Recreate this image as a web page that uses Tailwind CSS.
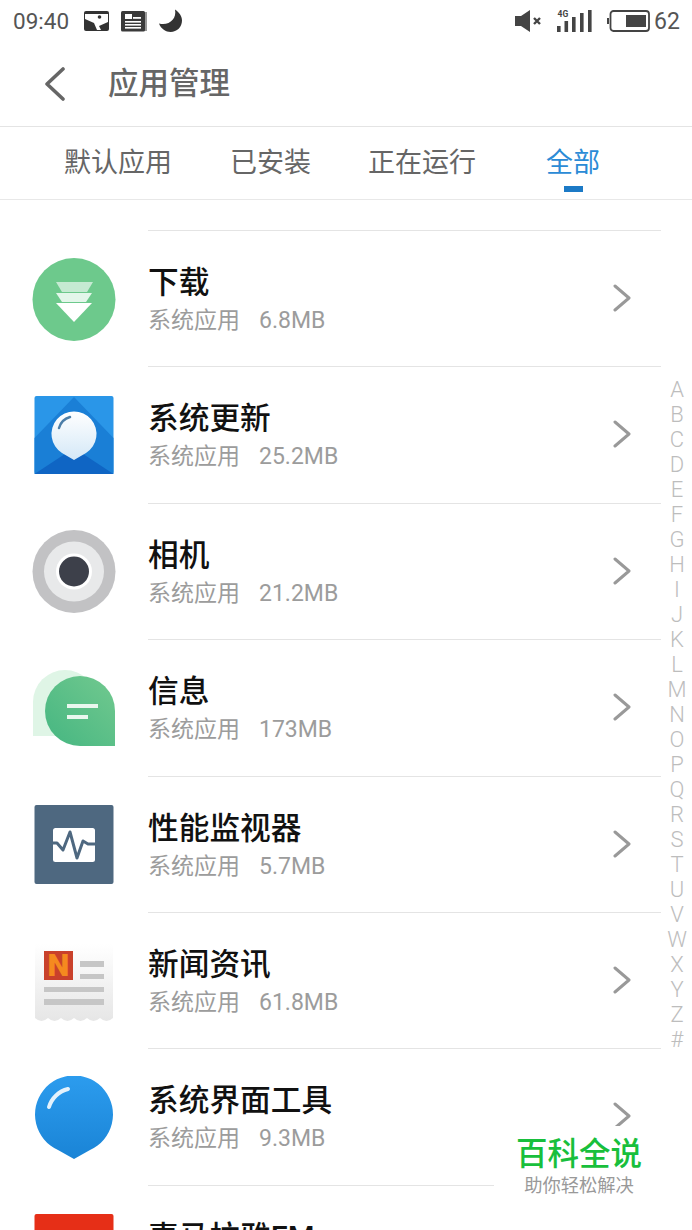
<!DOCTYPE html>
<html lang="zh-CN">

<head>
    <meta charset="UTF-8">
    <meta name="viewport" content="width=device-width, initial-scale=1.0">
    <title>应用管理</title>
    <script src="https://cdn.jsdelivr.net/npm/@tailwindcss/browser@4"></script>
</head>

<body class="bg-white font-['Roboto','Noto_Sans_CJK_SC',sans-serif]">
    <div class="relative h-[1230px] w-[692px] overflow-hidden bg-white">

        <!-- status bar -->
        <div class="flex h-[42px] items-center pl-[13px] text-[#555]">
            <span class="w-[71px] text-[22.5px] leading-none">09:40</span>
            <svg class="h-[22px] w-[26px]" viewBox="0 0 26 22">
                <rect x="0" y="1" width="25" height="20" rx="2" fill="#333" />
                <path d="M1 4 H24 V12 L15 16 L17 20 L13 20 L10 13 L1 9 Z" fill="#fff" />
                <circle cx="15.5" cy="7" r="1.8" fill="#333" />
            </svg>
            <svg class="ml-[11px] h-[22px] w-[27px]" viewBox="0 0 27 22">
                <rect x="21" y="2" width="5" height="19" fill="#999" />
                <rect x="0" y="1" width="24" height="20.5" rx="1.5" fill="#3a3a3a" />
                <rect x="4" y="4" width="7" height="5" fill="#fff" />
                <rect x="12" y="7" width="8" height="1.8" fill="#fff" />
                <rect x="4" y="11" width="16" height="1.6" fill="#fff" />
                <rect x="4" y="14" width="16" height="1.6" fill="#fff" />
                <rect x="4" y="17" width="16" height="1.6" fill="#fff" />
            </svg>
            <svg class="ml-[10px] h-[24px] w-[25px]" viewBox="0 0 25 24">
                <path d="M17 0.5 C19 10 11 17 1 14.5 C3 20 8 23 12.5 23 C19 23 24 18 24 11.5 C24 7 21 3 17 0.5 Z" fill="#333" />
            </svg>
            <svg class="ml-[332px] h-[22px] w-[27px]" viewBox="0 0 27 22">
                <path d="M0 6 H6 L15 0 V22 L6 16 H0 Z" fill="#444" />
                <path d="M19 8 L25 14 M25 8 L19 14" stroke="#444" stroke-width="2.4" />
            </svg>
            <svg class="ml-[14px] h-[24px] w-[37px]" viewBox="0 0 37 24">
                <text x="1.5" y="8" font-size="8.5" font-weight="700" font-family="Roboto" fill="#444">4G</text>
                <rect x="1" y="17" width="3.6" height="6" fill="#444" />
                <rect x="8.5" y="12" width="3.6" height="11" fill="#444" />
                <rect x="16" y="8" width="3.6" height="15" fill="#444" />
                <rect x="24" y="4" width="3.6" height="19" fill="#444" />
                <rect x="32" y="1" width="3.6" height="22" fill="#444" />
            </svg>
            <svg class="ml-[13px] h-[22px] w-[45px]" viewBox="0 0 45 22">
                <rect x="1" y="8" width="2" height="6" fill="#444" />
                <rect x="4.5" y="1" width="38.5" height="20" rx="3" fill="none" stroke="#444" stroke-width="1.8" />
                <rect x="20" y="5" width="20" height="12" fill="#444" />
            </svg>
            <span class="ml-[3px] text-[23px] leading-none">62</span>
        </div>

        <!-- header -->
        <div class="flex h-[85px] items-center border-b border-[#e4e4e4]">
            <svg class="ml-[44px] h-[34px] w-[22px]" viewBox="0 0 22 34">
                <path d="M19 2 L3 17 L19 32" fill="none" stroke="#666" stroke-width="3.6" stroke-linecap="round" stroke-linejoin="round" />
            </svg>
            <span class="ml-[42px] text-[30.5px] font-medium leading-none text-[#666]">应用管理</span>
        </div>

        <!-- tabs -->
        <div class="relative flex h-[73px] items-center border-b border-[#e8e8e8] pl-[64px] text-[27px] leading-none text-[#666]">
            <span>默认应用</span>
            <span class="ml-[58px]">已安装</span>
            <span class="ml-[57px]">正在运行</span>
            <span class="ml-[70px] text-[#2b8bd6]">全部</span>
            <div class="absolute left-[564px] top-[59px] h-[6px] w-[19px] bg-[#1c7ac6]"></div>
        </div>

        <!-- app list -->
        <div class="mt-[30px]">

            <div class="flex h-[136.4px] pl-[32px]">
                <svg class="mt-[27.5px] h-[84px] w-[84px] shrink-0" viewBox="0 0 84 84">
                    <circle cx="42" cy="41.5" r="41.5" fill="#6dc98c" />
                    <path d="M24 24 H61 L55 34 H30 Z" fill="#c5ead2" />
                    <path d="M24 35 H60 L54 44 H30 Z" fill="#e3f6ea" />
                    <path d="M24 45 H60 L42 64 Z" fill="#fff" />
                </svg>
                <div class="relative ml-[32px] w-[513px] border-t border-[#e4e4e4]">
                    <div class="mt-[32px] text-[30.7px] font-medium leading-[40px] text-[#111]">下载</div>
                    <div class="mt-[2px] text-[23px] leading-[32px] text-[#9c9c9c]">系统应用<span class="ml-[19px]">6.8MB</span></div>
                    <svg class="absolute left-[464px] top-[53px] h-[28px] w-[20px]" viewBox="0 0 20 28">
                        <path d="M3 2 L17 14 L3 26" fill="none" stroke="#999" stroke-width="3" stroke-linecap="round" stroke-linejoin="round" />
                    </svg>
                </div>
            </div>

            <div class="flex h-[136.4px] pl-[32px]">
                <svg class="mt-[27.5px] h-[84px] w-[84px] shrink-0" viewBox="0 0 84 84">
                    <defs>
                        <linearGradient id="pinA" x1="0" y1="0" x2="0" y2="1">
                            <stop offset="0" stop-color="#ffffff" />
                            <stop offset="1" stop-color="#d4e8f7" />
                        </linearGradient>
                    </defs>
                    <rect x="2.5" y="2" width="79" height="78" rx="2" fill="#2a96e8" />
                    <path d="M2.5 44 L42 3 L81.5 44 V80 H2.5 Z" fill="#1a7fd6" />
                    <path d="M2.5 80 L42 54 L81.5 80 Z" fill="#0f65c4" />
                    <path d="M42 66 L30 59 A22.5 22.5 0 1 1 54 59 Z" fill="url(#pinA)" />
                    <path d="M27 34 A16 16 0 0 1 38 23" fill="none" stroke="#4c7ea8" stroke-width="2.5" stroke-linecap="round" />
                </svg>
                <div class="relative ml-[32px] w-[513px] border-t border-[#e4e4e4]">
                    <div class="mt-[32px] text-[30.7px] font-medium leading-[40px] text-[#111]">系统更新</div>
                    <div class="mt-[2px] text-[23px] leading-[32px] text-[#9c9c9c]">系统应用<span class="ml-[19px]">25.2MB</span></div>
                    <svg class="absolute left-[464px] top-[53px] h-[28px] w-[20px]" viewBox="0 0 20 28">
                        <path d="M3 2 L17 14 L3 26" fill="none" stroke="#999" stroke-width="3" stroke-linecap="round" stroke-linejoin="round" />
                    </svg>
                </div>
            </div>

            <div class="flex h-[136.4px] pl-[32px]">
                <svg class="mt-[27.5px] h-[84px] w-[84px] shrink-0" viewBox="0 0 84 84">
                    <circle cx="42" cy="41.5" r="41.5" fill="#c2c2c4" />
                    <circle cx="42" cy="41.5" r="30" fill="#e8e9ea" />
                    <circle cx="42" cy="41.5" r="18" fill="#fff" />
                    <circle cx="42" cy="41.5" r="15" fill="#3d404a" />
                </svg>
                <div class="relative ml-[32px] w-[513px] border-t border-[#e4e4e4]">
                    <div class="mt-[32px] text-[30.7px] font-medium leading-[40px] text-[#111]">相机</div>
                    <div class="mt-[2px] text-[23px] leading-[32px] text-[#9c9c9c]">系统应用<span class="ml-[19px]">21.2MB</span></div>
                    <svg class="absolute left-[464px] top-[53px] h-[28px] w-[20px]" viewBox="0 0 20 28">
                        <path d="M3 2 L17 14 L3 26" fill="none" stroke="#999" stroke-width="3" stroke-linecap="round" stroke-linejoin="round" />
                    </svg>
                </div>
            </div>

            <div class="flex h-[136.4px] pl-[32px]">
                <svg class="mt-[27.5px] h-[84px] w-[84px] shrink-0" viewBox="0 0 84 84">
                    <defs>
                        <linearGradient id="msgA" x1="0" y1="1" x2="1" y2="0">
                            <stop offset="0" stop-color="#45b681" />
                            <stop offset="1" stop-color="#72c98f" />
                        </linearGradient>
                    </defs>
                    <path d="M1 69 V35 A32 32 0 0 1 33 3 A32 32 0 0 1 65 35 V69 Z" fill="#dff5e6" />
                    <path d="M83 79 H48 A35 35 0 1 1 83 44 Z" fill="url(#msgA)" />
                    <rect x="35" y="37" width="31" height="4" fill="#e9f7ee" />
                    <rect x="35" y="48" width="21" height="4" fill="#e9f7ee" />
                </svg>
                <div class="relative ml-[32px] w-[513px] border-t border-[#e4e4e4]">
                    <div class="mt-[32px] text-[30.7px] font-medium leading-[40px] text-[#111]">信息</div>
                    <div class="mt-[2px] text-[23px] leading-[32px] text-[#9c9c9c]">系统应用<span class="ml-[19px]">173MB</span></div>
                    <svg class="absolute left-[464px] top-[53px] h-[28px] w-[20px]" viewBox="0 0 20 28">
                        <path d="M3 2 L17 14 L3 26" fill="none" stroke="#999" stroke-width="3" stroke-linecap="round" stroke-linejoin="round" />
                    </svg>
                </div>
            </div>

            <div class="flex h-[136.4px] pl-[32px]">
                <svg class="mt-[27.5px] h-[84px] w-[84px] shrink-0" viewBox="0 0 84 84">
                    <rect x="2.5" y="2" width="79" height="79" rx="2" fill="#4e6880" />
                    <rect x="21" y="25" width="42" height="34" rx="2.5" fill="#fff" />
                    <path d="M21 40 L25 40 L31 47 L38 29 L45 55 L51 38 L56 41 H63" fill="none" stroke="#4e6880" stroke-width="3" stroke-linejoin="round" />
                </svg>
                <div class="relative ml-[32px] w-[513px] border-t border-[#e4e4e4]">
                    <div class="mt-[32px] text-[30.7px] font-medium leading-[40px] text-[#111]">性能监视器</div>
                    <div class="mt-[2px] text-[23px] leading-[32px] text-[#9c9c9c]">系统应用<span class="ml-[19px]">5.7MB</span></div>
                    <svg class="absolute left-[464px] top-[53px] h-[28px] w-[20px]" viewBox="0 0 20 28">
                        <path d="M3 2 L17 14 L3 26" fill="none" stroke="#999" stroke-width="3" stroke-linecap="round" stroke-linejoin="round" />
                    </svg>
                </div>
            </div>

            <div class="flex h-[136.4px] pl-[32px]">
                <svg class="mt-[27.5px] h-[84px] w-[84px] shrink-0" viewBox="0 0 84 84">
                    <defs>
                        <linearGradient id="paperA" x1="0" y1="0" x2="0" y2="1">
                            <stop offset="0" stop-color="#ffffff" />
                            <stop offset="1" stop-color="#e6e6e6" />
                        </linearGradient>
                    </defs>
                    <path d="M3 5 H81 V79 Q74.5 85 68 79 Q61.5 85 55 79 Q48.5 85 42 79 Q35.5 85 29 79 Q22.5 85 16 79 Q9.5 85 3 79 Z" fill="url(#paperA)" />
                    <rect x="12" y="12" width="29" height="29" fill="#c9412b" />
                    <text x="26.5" y="37" text-anchor="middle" font-size="31" font-weight="900" font-family="Roboto" fill="#f58a1f">N</text>
                    <rect x="48" y="22" width="24" height="6" fill="#c6c6c6" />
                    <rect x="48" y="35" width="24" height="5" fill="#c6c6c6" />
                    <rect x="12" y="48" width="60" height="5" fill="#c6c6c6" />
                    <rect x="12" y="60" width="60" height="6" fill="#c6c6c6" />
                </svg>
                <div class="relative ml-[32px] w-[513px] border-t border-[#e4e4e4]">
                    <div class="mt-[32px] text-[30.7px] font-medium leading-[40px] text-[#111]">新闻资讯</div>
                    <div class="mt-[2px] text-[23px] leading-[32px] text-[#9c9c9c]">系统应用<span class="ml-[19px]">61.8MB</span></div>
                    <svg class="absolute left-[464px] top-[53px] h-[28px] w-[20px]" viewBox="0 0 20 28">
                        <path d="M3 2 L17 14 L3 26" fill="none" stroke="#999" stroke-width="3" stroke-linecap="round" stroke-linejoin="round" />
                    </svg>
                </div>
            </div>

            <div class="flex h-[136.4px] pl-[32px]">
                <svg class="mt-[27.5px] h-[84px] w-[84px] shrink-0" viewBox="0 0 84 84">
                    <defs>
                        <linearGradient id="pinB" x1="0" y1="0" x2="0" y2="1">
                            <stop offset="0" stop-color="#2c9cee" />
                            <stop offset="1" stop-color="#1a84d6" />
                        </linearGradient>
                    </defs>
                    <path d="M42 83 L26 74 A39 39 0 1 1 58 74 Z" fill="url(#pinB)" />
                    <path d="M17 31 A26 26 0 0 1 36 13" fill="none" stroke="#e4f2fc" stroke-width="4" stroke-linecap="round" />
                </svg>
                <div class="relative ml-[32px] w-[513px] border-t border-[#e4e4e4]">
                    <div class="mt-[32px] text-[30.7px] font-medium leading-[40px] text-[#111]">系统界面工具</div>
                    <div class="mt-[2px] text-[23px] leading-[32px] text-[#9c9c9c]">系统应用<span class="ml-[19px]">9.3MB</span></div>
                    <svg class="absolute left-[464px] top-[53px] h-[28px] w-[20px]" viewBox="0 0 20 28">
                        <path d="M3 2 L17 14 L3 26" fill="none" stroke="#999" stroke-width="3" stroke-linecap="round" stroke-linejoin="round" />
                    </svg>
                </div>
            </div>

            <div class="flex h-[136.4px] pl-[32px]">
                <svg class="mt-[27.5px] h-[84px] w-[84px] shrink-0" viewBox="0 0 84 84">
                    <rect x="2.5" y="2" width="79" height="79" rx="2" fill="#e62f17" />
                </svg>
                <div class="relative ml-[32px] w-[513px] border-t border-[#e4e4e4]">
                    <div class="mt-[32px] text-[30.7px] font-medium leading-[40px] text-[#111]">喜马拉雅FM</div>
                </div>
            </div>
        </div>

        <!-- alphabet index -->
        <div class="absolute left-[662px] top-[377px] flex w-[30px] flex-col items-center text-[22px] font-light leading-[25px] text-[#bdbdbd]">
            <span>A</span><span>B</span><span>C</span><span>D</span><span>E</span><span>F</span><span>G</span><span>H</span><span>I</span>
            <span>J</span><span>K</span><span>L</span><span>M</span><span>N</span><span>O</span><span>P</span><span>Q</span><span>R</span>
            <span>S</span><span>T</span><span>U</span><span>V</span><span>W</span><span>X</span><span>Y</span><span>Z</span><span>#</span>
        </div>

        <!-- watermark -->
        <div class="absolute left-[494px] top-[1126px] flex h-[80px] w-[174px] flex-col items-center bg-white pr-[4px]">
            <span class="mt-[10px] text-[31.5px] font-medium leading-[38px] text-[#18bf3c]">百科全说</span>
            <span class="text-[18.3px] leading-[24px] text-[#999]">助你轻松解决</span>
        </div>
    </div>
</body>

</html>
